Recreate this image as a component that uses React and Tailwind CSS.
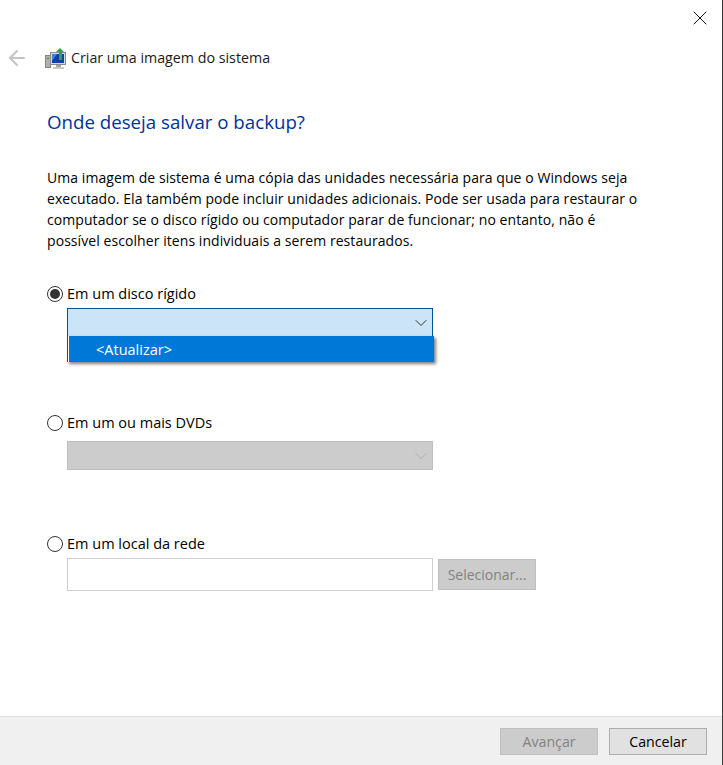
import React from "react";
import { ArrowLeft, ChevronDown, X } from "lucide-react";

const BackupIcon = () => (
  <svg width="22" height="22" viewBox="0 0 22 22" className="shrink-0">
    <rect x="0.5" y="8.5" width="5" height="12" fill="#b0b0a8" stroke="#85857d" strokeWidth="1" />
    <rect x="2" y="11" width="2" height="1" fill="#4c7f3a" />
    <rect x="5.5" y="5.5" width="15" height="12" fill="#d8d8d4" stroke="#8c8c88" strokeWidth="1" />
    <rect x="7" y="7" width="12" height="9" fill="#123fa8" />
    <path d="M7 7h5l-5 7z" fill="#3b86d8" />
    <rect x="11" y="18" width="5" height="2" fill="#a5a5a0" />
    <rect x="8" y="20" width="11" height="2" fill="#c9c9c5" />
    <path d="M15 1l4 4h-2v8h-3V5h-3z" fill="#3a9a5c" />
  </svg>
);

const Radio = ({ checked }) => (
  <span className="w-[16px] h-[16px] shrink-0 rounded-full border border-[#333] bg-white flex items-center justify-center">
    {checked && <span className="w-[10px] h-[10px] rounded-full bg-[#333]" />}
  </span>
);

const App = () => {
  return (
    <div className="h-[765px] w-[723px] bg-white border-r border-[#3a3a3a] flex flex-col text-[14.5px] leading-[20px] text-black font-['Open_Sans','Noto_Sans',sans-serif]">
      <div className="flex justify-end h-[38px] pr-[10px] pt-[6px]">
        <X size={24} strokeWidth={1} color="#111" />
      </div>

      <div className="flex items-center h-[40px] pl-[5px]">
        <ArrowLeft size={24} strokeWidth={2} color="#c4c4c4" />
        <span className="ml-[16px]"><BackupIcon /></span>
        <span className="ml-[4px] text-[14.25px] text-[#1a1a1a]">Criar uma imagem do sistema</span>
      </div>

      <div className="flex-1 pl-[47px] pr-[40px]">
        <h1 className="mt-[31px] text-[18.7px] leading-[26px] text-[#003399] font-normal">Onde deseja salvar o backup?</h1>

        <p className="mt-[32px] text-[14px] leading-[21px] tracking-[0.07px] w-[600px]">
          Uma imagem de sistema é uma cópia das unidades necessária para que o Windows seja executado. Ela também pode incluir unidades adicionais. Pode ser usada para restaurar o computador se o disco rígido ou computador parar de funcionar; no entanto, não é possível escolher itens individuais a serem restaurados.
        </p>

        <div className="mt-[33px] flex items-center gap-[4px] h-[20px]">
          <Radio checked />
          <span>Em um disco rígido</span>
        </div>
        <div className="relative mt-[4px] ml-[20px] w-[366px] h-[29px] border border-[#005499] bg-[#cce4f7] flex items-center justify-end pr-[1px]">
          <ChevronDown size={20} strokeWidth={1.2} color="#333" />
          <div className="absolute left-[-1px] top-[27px] w-[367px] h-[26px] border-l border-l-[#005499] shadow-[2px_2px_3px_rgba(0,0,0,0.5)]">
            <div className="h-full bg-[#0078d7] border-l border-l-white pl-[27px] pt-[1px] text-white flex items-center">
              &lt;Atualizar&gt;
            </div>
          </div>
        </div>

        <div className="mt-[76px] flex items-center gap-[4px] h-[20px]">
          <Radio />
          <span>Em um ou mais DVDs</span>
        </div>
        <div className="mt-[8px] ml-[20px] w-[366px] h-[29px] border border-[#bfbfbf] bg-[#cccccc] flex items-center justify-end pr-[1px]">
          <ChevronDown size={20} strokeWidth={1} color="#a8a8a8" />
        </div>

        <div className="mt-[64px] flex items-center gap-[4px] h-[20px]">
          <Radio />
          <span>Em um local da rede</span>
        </div>
        <div className="mt-[4px] ml-[20px] flex items-center gap-[5px]">
          <div className="w-[366px] h-[33px] border border-[#cfcfcf] bg-white" />
          <div className="w-[98px] h-[31px] border border-[#bfbfbf] bg-[#cccccc] text-[14px] text-[#838383] flex items-center justify-center">Selecionar...</div>
        </div>
      </div>

      <div className="h-[49px] border-t border-[#dfdfdf] bg-[#f0f0f0] flex justify-end items-start gap-[11px] pt-[11px] pr-[15px] text-[14.2px]">
        <div className="w-[98px] h-[27px] border border-[#bfbfbf] bg-[#cccccc] text-[#838383] flex items-center justify-center">Avançar</div>
        <div className="w-[98px] h-[27px] border border-[#adadad] bg-[#e1e1e1] flex items-center justify-center">Cancelar</div>
      </div>
    </div>
  );
};

export default App;
